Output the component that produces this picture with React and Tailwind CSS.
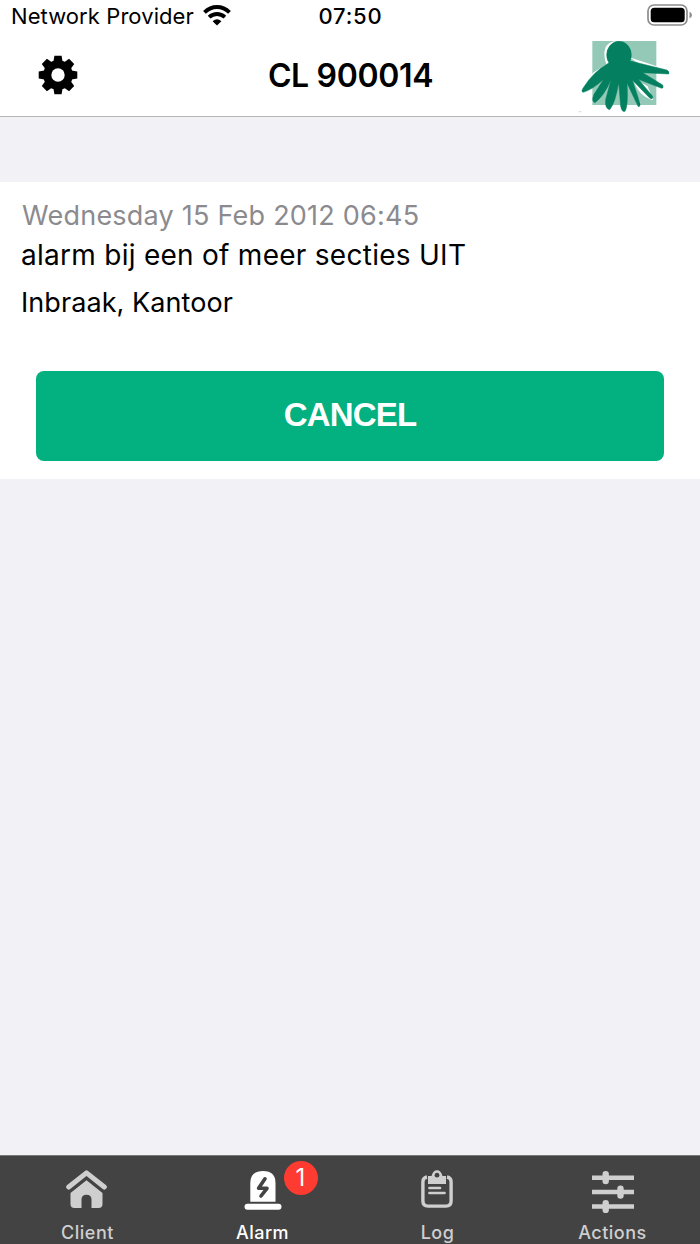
const tabs = [
    { name: 'Client', icon: HomeIcon },
    { name: 'Alarm', icon: AlarmIcon, active: true, badge: 1 },
    { name: 'Log', icon: LogIcon },
    { name: 'Actions', icon: ActionsIcon }
];

function HomeIcon() {
    return (
        <svg width="41" height="38" viewBox="0 0 41 38" className="mr-[2px] mb-[2px]">
            <path d="M2.7 17 L20.5 2.9 L38.3 17" fill="none" stroke="currentColor" strokeWidth="5" strokeLinecap="round" strokeLinejoin="round" />
            <path d="M20.5 10.3 L36.5 23 V34 Q36.5 38 32.5 38 H25.5 V29.5 Q25.5 24.7 20.5 24.7 Q15.5 24.7 15.5 29.5 V38 H8.5 Q4.5 38 4.5 34 V23 Z" fill="currentColor" />
        </svg>
    );
}

function AlarmIcon() {
    return (
        <svg width="38" height="40" viewBox="0 0 38 40">
            <path d="M6.3 31.7 V13 Q6.3 1 19 1 Q31.5 1 31.5 13 V31.7 Z" fill="currentColor" />
            <rect x="0.5" y="33.8" width="37" height="6" rx="3" fill="currentColor" />
            <path d="M21 8.8 L14.6 18.3 H23 L17 26" fill="none" stroke="#434343" strokeWidth="3.6" strokeLinecap="round" strokeLinejoin="round" />
        </svg>
    );
}

function LogIcon() {
    return (
        <svg width="32" height="38" viewBox="0 0 32 38" className="mr-px mb-[2px]">
            <path d="M6 7 Q1.9 7.7 1.9 12 V31 Q1.9 36.1 7 36.1 H25 Q30.1 36.1 30.1 31 V12 Q30.1 7.7 26 7" fill="none" stroke="currentColor" strokeWidth="3.4" />
            <path d="M7 6 H10.5 Q12 0.3 16 0.3 Q20 0.3 21.5 6 H25 V14 H7 Z" fill="currentColor" />
            <circle cx="16" cy="5.2" r="2.4" fill="#434343" />
            <path d="M8.5 18 H19 M8.5 23 H23.5" stroke="currentColor" strokeWidth="2.7" strokeLinecap="round" />
        </svg>
    );
}

function ActionsIcon() {
    return (
        <svg width="42" height="42" viewBox="0 0 42 42" className="mt-1">
            <path d="M0 6.7 H42 M0 21 H42 M0 35.5 H42" stroke="currentColor" strokeWidth="4.6" />
            <path d="M13.7 3.3 V10 M28.5 17.7 V24.5 M13.7 32.2 V39" stroke="currentColor" strokeWidth="6.4" strokeLinecap="round" />
        </svg>
    );
}

function WifiIcon() {
    return (
        <svg width="28" height="21" viewBox="0 0 28 21" className="-mt-[2px]">
            <path d="M1.5 7.4 Q7 2 14 2 Q21 2 26.5 7.4 M6.1 12.1 Q9.6 9 14 9 Q18.4 9 21.9 12.1" fill="none" stroke="#000" strokeWidth="3.9" />
            <path d="M14 20.5 L9.6 16.2 Q14 12.4 18.4 16.2 Z" fill="#000" />
        </svg>
    );
}

function BatteryIcon() {
    return (
        <svg width="45" height="22" viewBox="0 0 45 22" className="-mt-[3px]">
            <rect x="1" y="1" width="39" height="20" rx="6" fill="none" stroke="#8c8c8c" strokeWidth="1.7" />
            <rect x="3.7" y="3.7" width="34" height="14.6" rx="3.6" fill="#000" />
            <path d="M42.5 7.5 Q45 9 45 11 Q45 13 42.5 14.5 Z" fill="#8c8c8c" />
        </svg>
    );
}

function GearIcon() {
    return (
        <svg width="40" height="40" viewBox="-20 -20 40 40">
            <g fill="#000">
                {[0, 45, 90, 135].map((angle) => (
                    <path key={angle} transform={`rotate(${angle})`} d="M-3.6 -19.3 H3.6 L4.8 -12 V12 L3.6 19.3 H-3.6 L-4.8 12 V-12 Z" />
                ))}
                <circle r="14.8" />
            </g>
            <circle r="6.7" fill="#fff" />
        </svg>
    );
}

function Logo() {
    return (
        <svg width="92" height="74" viewBox="26 118 276 222">
            <rect x="69" y="124" width="192" height="192" fill="#94c9b8" />
            <path d="M112 198 Q90 132 138 124 L150 190 Z M62 242 L70 220 L122 186 L124 200 Z M180 173 L262 200 L250 220 Z M190 235 Q206 290 252 302 L235 260 Z M176 240 L206 322 L214 310 Z" fill="#fff" />
            <g fill="#047f5f" stroke="#047f5f" strokeWidth="1.5">
                <ellipse cx="149" cy="166" rx="37" ry="41" />
                <path d="M118 190 L183 184 L292 211 Q302 216 298 223 L220 219 L280 256 Q284 266 277 266 L207 239 L250 290 Q252 302 240 294 L189 241 L212 311 Q213 324 206 320 L173 250 Q177 320 167 335 Q158 339 154 320 L148 249 Q138 310 121 330 Q106 326 109 300 L125 240 Q105 288 77 309 Q65 306 74 284 L103 239 Q69 270 42 278 Q34 276 42 264 Q72 216 118 190 Z" />
            </g>
            <path d="M27 336 H36" stroke="#ccc" strokeWidth="2" />
        </svg>
    );
}

export default function App() {
    return (
        <div className="flex h-[1244px] w-[700px] flex-col overflow-hidden bg-[#f2f1f6] font-['Inter',sans-serif] text-black">
            {/* Header */}
            <header className="h-[117px] border-b border-[#b5b5b8] bg-white">
                <div className="grid h-8 grid-cols-3 items-center pr-[8px] pl-[11px]">
                    <div className="flex items-center gap-[9px]">
                        <span className="text-[22px] leading-8 tracking-[0.08px] whitespace-nowrap">Network Provider</span>
                        <WifiIcon />
                    </div>
                    <span className="pr-[2px] text-center text-[22px] leading-8 font-medium tracking-[0.8px]">07:50</span>
                    <div className="flex justify-end">
                        <BatteryIcon />
                    </div>
                </div>
                <div className="grid h-[84px] grid-cols-3 items-center pr-[30px] pl-[38px]">
                    <button className="justify-self-start pt-px"><GearIcon /></button>
                    <h1 className="pt-1 pr-[7px] text-center text-[32px] font-semibold tracking-[-0.35px] whitespace-nowrap">CL 900014</h1>
                    <div className="justify-self-end pt-1"><Logo /></div>
                </div>
            </header>

            {/* Alarm message */}
            <main className="mt-[65px] h-[297px] bg-white px-[22px] pt-[14px]">
                <p className="text-[27px] leading-10 tracking-[0.23px] text-[#8b8b8f]">Wednesday 15 Feb 2012 06:45</p>
                <p className="-ml-px text-[28px] leading-[39px] tracking-[0.27px]">alarm bij een of meer secties UIT</p>
                <p className="mt-2 -ml-px text-[27px] leading-10 tracking-[0.07px]">Inbraak, Kantoor</p>
                <button className="mx-[14px] mt-[47.5px] flex h-[90px] w-[628px] items-center justify-center rounded-lg bg-[#03b080] pb-px font-['Liberation_Sans',sans-serif] text-[33px] font-bold tracking-[-0.85px] text-white">
                    CANCEL
                </button>
            </main>

            {/* Tab bar */}
            <nav className="mt-auto grid h-[89px] grid-cols-4 border-t border-[#777] bg-[#434343]">
                {tabs.map(({ name, icon: Icon, active, badge }) => (
                    <div key={name} className={active ? 'flex flex-col items-center text-white' : 'flex flex-col items-center text-[#cfcfcf]'}>
                        <div className="relative mt-3 flex h-[44px] items-center">
                            <Icon />
                            {badge && (
                                <span className="absolute -top-[7px] left-[40px] flex size-[34px] items-center justify-center rounded-full bg-[#fd3b30] text-[24px] text-white">{badge}</span>
                            )}
                        </div>
                        <span className="mt-[9px] text-[18px] leading-6 font-medium tracking-[0.5px]">{name}</span>
                    </div>
                ))}
            </nav>
        </div>
    );
}
